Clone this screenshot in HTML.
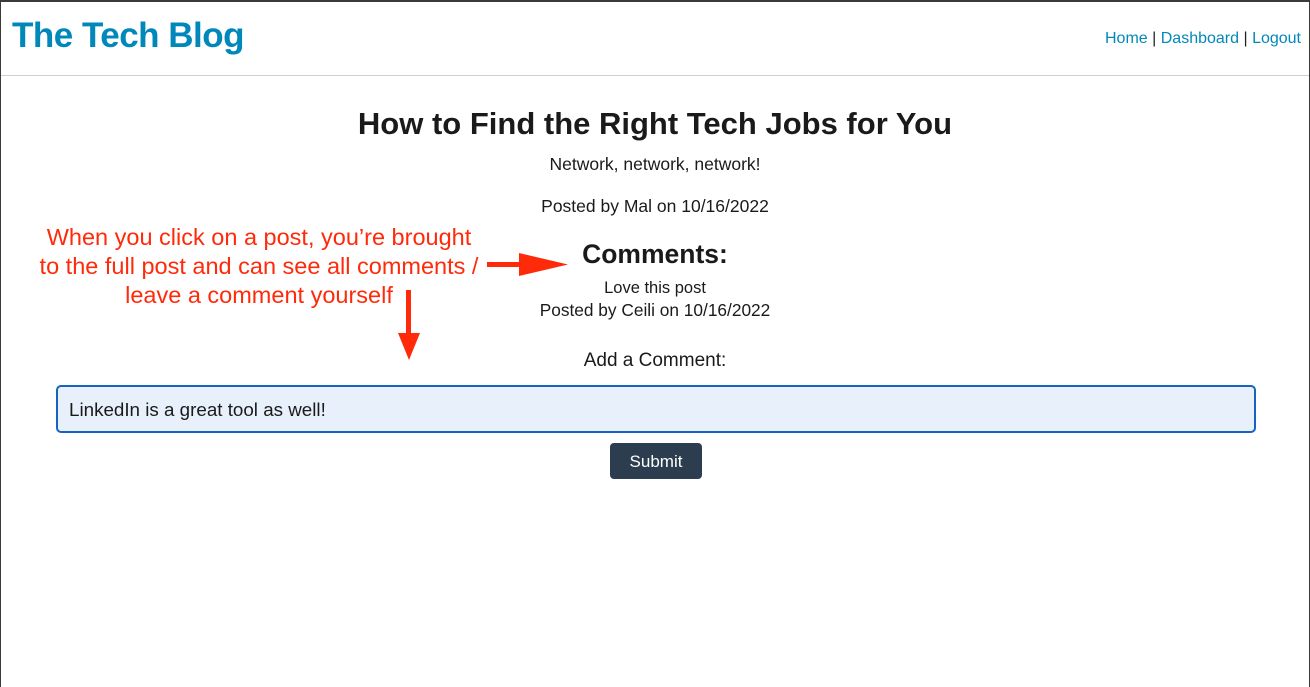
<!DOCTYPE html>
<html><head><meta charset="utf-8"><style>
body{margin:0;width:1310px;height:687px;overflow:hidden;background:#fff;font-family:"Liberation Sans",sans-serif;color:#1a1a1a;position:relative}
.frame{position:absolute;inset:0;border-top:2px solid #3a3a3a;border-left:1px solid #3a3a3a;border-right:1px solid #3a3a3a;box-sizing:border-box;pointer-events:none}
.a{position:absolute;white-space:nowrap}
.c{left:0;width:1310px;text-align:center}
.blue{color:#0088bb}
.red{color:#ff2a0a;font-size:23.5px;line-height:29px;text-align:center}
</style></head><body>
<div class="a blue" style="left:12px;top:16px;font-size:35px;font-weight:bold;letter-spacing:-0.5px">The Tech Blog</div>
<div class="a blue" style="right:9px;top:30px;font-size:16px"><span>Home</span><span style="color:#222"> | </span><span>Dashboard</span><span style="color:#222"> | </span><span>Logout</span></div>
<div class="a" style="left:1px;right:1px;top:75px;height:1px;background:#cfcfcf"></div>
<div class="a c" style="top:106px;font-size:31px;font-weight:bold;letter-spacing:0px">How to Find the Right Tech Jobs for You</div>
<div class="a c" style="top:154px;font-size:17.5px">Network, network, network!</div>
<div class="a c" style="top:196px;font-size:17.5px">Posted by Mal on 10/16/2022</div>
<div class="a c" style="top:239px;font-size:26.5px;font-weight:bold">Comments:</div>
<div class="a c" style="top:279px;font-size:16.5px">Love this post</div>
<div class="a c" style="top:300px;font-size:17.3px">Posted by Ceili on 10/16/2022</div>
<div class="a c" style="top:350px;font-size:19px">Add a Comment:</div>
<div class="a" style="left:56px;top:385px;width:1200px;height:48px;box-sizing:border-box;border:2px solid #1565c0;border-radius:5px;background:#e8f0fc;font-size:18.8px;padding:12px 0 0 11px">LinkedIn is a great tool as well!</div>
<div class="a" style="left:610px;top:443px;width:92px;height:36px;background:#2b3d4f;border-radius:4px;color:#fff;font-size:17px;text-align:center;line-height:37px">Submit</div>
<div class="a red" style="left:10px;top:223px;width:498px">When you click on a post, you’re brought<br>to the full post and can see all comments /<br>leave a comment yourself</div>
<svg class="a" style="left:0;top:0" width="1310" height="687">
<rect x="487" y="262" width="34" height="5" fill="#ff2a0a"/>
<polygon points="519,253 568,264.5 519,276" fill="#ff2a0a"/>
<rect x="406" y="290" width="5" height="45" fill="#ff2a0a"/>
<polygon points="398,333 420,333 409,360" fill="#ff2a0a"/>
</svg>
<div class="frame"></div>
</body></html>
